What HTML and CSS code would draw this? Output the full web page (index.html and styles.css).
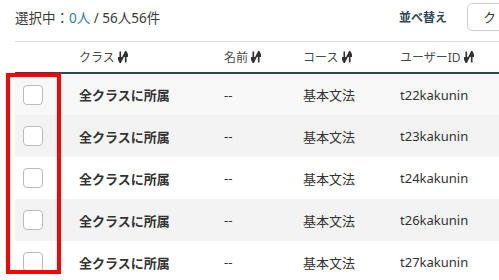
FILE: index.html
```html
<html>
    <head>
        <title>受講者一覧</title>
        <link rel="stylesheet" href="styles.css">
    </head>
    <body>
        <div class="page">
            <div class="toolbar">
                <div class="count">選択中：<span class="sel">0人</span> / 56人56件</div>
                <div class="sort-label">並べ替え</div>
                <div class="sort-btn">ク</div>
            </div>
            <table class="list">
                <colgroup>
                    <col class="c-check"><col class="c-class"><col class="c-name"><col class="c-course"><col class="c-id">
                </colgroup>
                <thead>
                    <tr>
                        <th></th>
                        <th class="pad">クラス <svg class="sort" viewBox="0 0 11 12"><path d="M2.5 0v8" /><polygon points="0,7 5,7 2.5,12"/><path d="M8.5 4v8"/><polygon points="6,5 11,5 8.5,0"/></svg></th>
                        <th>名前 <svg class="sort" viewBox="0 0 11 12"><path d="M2.5 0v8" /><polygon points="0,7 5,7 2.5,12"/><path d="M8.5 4v8"/><polygon points="6,5 11,5 8.5,0"/></svg></th>
                        <th>コース <svg class="sort" viewBox="0 0 11 12"><path d="M2.5 0v8" /><polygon points="0,7 5,7 2.5,12"/><path d="M8.5 4v8"/><polygon points="6,5 11,5 8.5,0"/></svg></th>
                        <th>ユーザーID <svg class="sort" viewBox="0 0 11 12"><path d="M2.5 0v8" /><polygon points="0,7 5,7 2.5,12"/><path d="M8.5 4v8"/><polygon points="6,5 11,5 8.5,0"/></svg></th>
                    </tr>
                </thead>
                <tbody>
                    <tr class="hover"><td><span class="box"></span></td><td class="pad cls">全クラスに所属</td><td>--</td><td>基本文法</td><td>t22kakunin</td></tr>
                    <tr class="odd"><td><span class="box"></span></td><td class="pad cls">全クラスに所属</td><td>--</td><td>基本文法</td><td>t23kakunin</td></tr>
                    <tr><td><span class="box"></span></td><td class="pad cls">全クラスに所属</td><td>--</td><td>基本文法</td><td>t24kakunin</td></tr>
                    <tr class="odd"><td><span class="box"></span></td><td class="pad cls">全クラスに所属</td><td>--</td><td>基本文法</td><td>t26kakunin</td></tr>
                    <tr><td><span class="box"></span></td><td class="pad cls">全クラスに所属</td><td>--</td><td>基本文法</td><td>t27kakunin</td></tr>
                </tbody>
            </table>
            <div class="mark"></div>
        </div>
    </body>
</html>
```

FILE: styles.css
```css
body{
    margin: 0;
    overflow: hidden;
    background: #fff;
    font-family: "Noto Sans", "Noto Sans CJK JP", sans-serif;
    color: #333;
}
.page{
    position: relative;
    width: 484px;
    padding-left: 15px;
}
.toolbar{
    display: flex;
    align-items: center;
    overflow: hidden;
    padding-top: 3px;
    padding-bottom: 10px;
    border-bottom: 1px solid #dcdcdc;
}
.count{
    font-size: 13.5px;
    color: #3a3a3a;
}
.sel{
    color: #2a7ca6;
}
.sort-label{
    margin-left: auto;
    font-size: 12px;
    font-weight: bold;
    color: #2e4756;
}
.sort-btn{
    flex-shrink: 0;
    margin-left: 20px;
    margin-right: -56px;
    width: 88px;
    height: 28px;
    box-sizing: border-box;
    border: 1px solid #cfcfcf;
    border-radius: 5px;
    padding-left: 15px;
    font-size: 13px;
    line-height: 26px;
    color: #333;
}
.list{
    width: 100%;
    table-layout: fixed;
    border-collapse: collapse;
    font-size: 13px;
}
.c-check{ width: 49px; }
.c-class{ width: 160px; }
.c-name{ width: 79px; }
.c-course{ width: 97px; }
th{
    height: 31px;
    text-align: left;
    font-weight: normal;
    font-size: 12px;
    color: #4a4a4a;
    border-bottom: 2px solid #1f4d5c;
    padding: 0;
    white-space: nowrap;
}
.sort{
    width: 10px;
    height: 12px;
    vertical-align: -1px;
    fill: #333;
    stroke: #333;
    stroke-width: 1.8;
}
td{
    height: 42px;
    padding: 0;
    color: #333;
}
td.pad, th.pad{
    padding-left: 15px;
}
.cls{
    font-weight: bold;
}
tr.hover td{ background: #f8f8f8; }
tr.odd td{ background: #f3f3f3; }
.box{
    display: block;
    margin-left: 8px;
    width: 20px;
    height: 20px;
    box-sizing: border-box;
    border: 1.5px solid #bbb;
    border-radius: 4px;
    background: #fff;
}
.mark{
    position: absolute;
    left: 6px;
    top: 73px;
    width: 47px;
    height: 193px;
    border: 4px solid #f00;
}
```
